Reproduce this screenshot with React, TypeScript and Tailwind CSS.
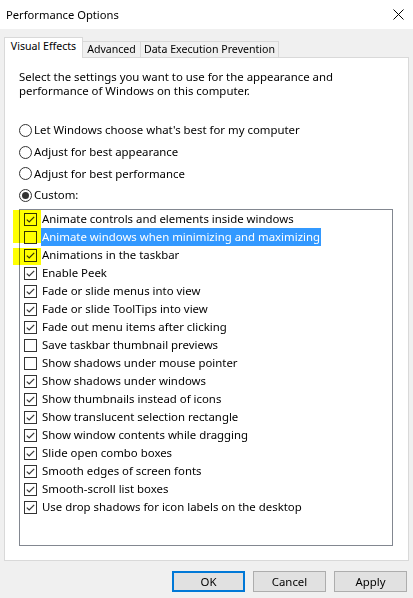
import React from "react";

const items: [string, boolean][] = [
  ["Animate controls and elements inside windows", true],
  ["Animate windows when minimizing and maximizing", false],
  ["Animations in the taskbar", true],
  ["Enable Peek", true],
  ["Fade or slide menus into view", true],
  ["Fade or slide ToolTips into view", true],
  ["Fade out menu items after clicking", true],
  ["Save taskbar thumbnail previews", false],
  ["Show shadows under mouse pointer", false],
  ["Show shadows under windows", true],
  ["Show thumbnails instead of icons", true],
  ["Show translucent selection rectangle", true],
  ["Show window contents while dragging", true],
  ["Slide open combo boxes", true],
  ["Smooth edges of screen fonts", true],
  ["Smooth-scroll list boxes", true],
  ["Use drop shadows for icon labels on the desktop", true],
];

const radios = [
  { label: "Let Windows choose what's best for my computer", h: "h-[22px]" },
  { label: "Adjust for best appearance", h: "h-[22px]" },
  { label: "Adjust for best performance", h: "h-[21px]" },
  { label: "Custom:", h: "h-[22px]", checked: true },
];

function CheckBox({ checked }: { checked: boolean }) {
  return (
    <svg width="13" height="13" viewBox="0 0 13 13" className="shrink-0">
      <rect x="0.5" y="0.5" width="12" height="12" fill="white" stroke="#333" />
      {checked && (
        <polyline points="2.8,6.6 5.2,9 10.2,3.8" fill="none" stroke="#333" strokeWidth="1.2" />
      )}
    </svg>
  );
}

function Radio({ checked }: { checked?: boolean }) {
  return (
    <svg width="13" height="13" viewBox="0 0 13 13" className="shrink-0">
      <circle cx="6.5" cy="6.5" r="6" fill="white" stroke="#333" />
      {checked && <circle cx="6.5" cy="6.5" r="3.5" fill="#333" />}
    </svg>
  );
}

export default function App() {
  return (
    <div
      className="relative w-[413px] h-[598px] overflow-hidden bg-[#f0f0f0] text-[11.4px] text-black whitespace-nowrap"
      style={{ fontFamily: '"Noto Sans", "Open Sans", sans-serif' }}
    >
      {/* Title bar */}
      <div className="h-[29px] bg-white flex items-center justify-between pl-[6px] pr-[9px]">
        <span className="leading-none text-[11.2px]">Performance Options</span>
        <svg width="11" height="11" viewBox="0 0 11 11">
          <path d="M0.5 0.5 L10.5 10.5 M10.5 0.5 L0.5 10.5" stroke="#000" strokeWidth="1" />
        </svg>
      </div>

      {/* Tabs */}
      <div className="mt-[8px] px-[4px] flex items-end text-[10.6px]">
        <div className="relative z-10 -mb-px w-[79px] h-[21px] bg-white border border-b-0 border-[#d9d9d9] flex items-center justify-center pb-[2px]">
          Visual Effects
        </div>
        <div className="w-[58px] h-[16px] border border-l-0 border-b-0 border-[#d9d9d9] flex items-center justify-center">
          Advanced
        </div>
        <div className="w-[138px] h-[16px] border border-l-0 border-b-0 border-[#d9d9d9] flex items-center justify-center">
          Data Execution Prevention
        </div>
      </div>

      {/* Panel */}
      <div className="mx-[4px] h-[504px] bg-white border border-[#d9d9d9] px-[14px] pt-[12px]">
        <p className="leading-[14px]">
          Select the settings you want to use for the appearance and
          <br />
          performance of Windows on this computer.
        </p>

        <div className="mt-[21px] flex flex-col">
          {radios.map((r) => (
            <div key={r.label} className={`${r.h} flex items-center gap-[2px]`}>
              <Radio checked={r.checked} />
              <span>{r.label}</span>
            </div>
          ))}
        </div>

        <div className="mt-[3px] w-[374px] h-[337px] border border-[#828790] pl-[4px]">
          {items.map(([label, checked], i) => (
            <div key={label} className="h-[18px] flex items-center">
              <CheckBox checked={checked} />
              <span
                className={`ml-[4px] px-[1px] h-[18px] flex items-center ${
                  i === 1 ? "bg-[#3399ff] text-white" : ""
                }`}
              >
                {label}
              </span>
            </div>
          ))}
        </div>
      </div>

      {/* Buttons */}
      <div className="mt-[10px] pr-[6px] flex justify-end gap-[8px]">
        <button className="w-[73px] h-[21px] bg-[#e1e1e1] border-2 border-[#0078d7] flex items-center justify-center">
          OK
        </button>
        <button className="w-[73px] h-[21px] bg-[#e1e1e1] border border-[#adadad] flex items-center justify-center">
          Cancel
        </button>
        <button className="w-[73px] h-[21px] bg-[#e1e1e1] border border-[#adadad] flex items-center justify-center">
          Apply
        </button>
      </div>

      {/* Highlighter marks */}
      <div className="absolute left-[13px] top-[210px] w-[28px] h-[33px] bg-[#ffff00] mix-blend-multiply" />
      <div className="absolute left-[13px] top-[248px] w-[28px] h-[17px] bg-[#ffff00] mix-blend-multiply" />
    </div>
  );
}
